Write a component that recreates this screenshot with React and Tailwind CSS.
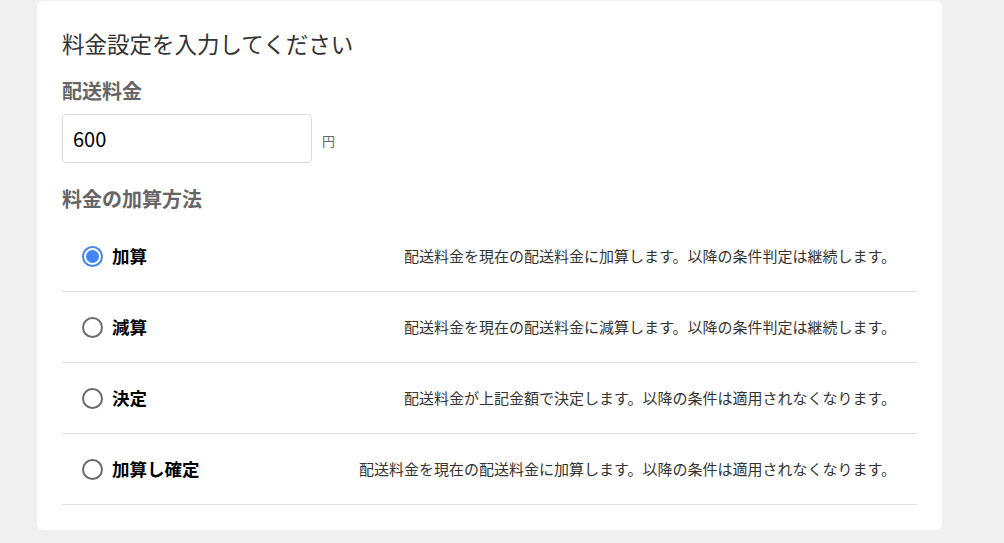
const options = [
  { label: "加算", desc: "配送料金を現在の配送料金に加算します。以降の条件判定は継続します。", checked: true },
  { label: "減算", desc: "配送料金を現在の配送料金に減算します。以降の条件判定は継続します。" },
  { label: "決定", desc: "配送料金が上記金額で決定します。以降の条件は適用されなくなります。" },
  { label: "加算し確定", desc: "配送料金を現在の配送料金に加算します。以降の条件は適用されなくなります。" },
];

const Radio = ({ checked }) =>
  checked ? (
    <span className="w-[21px] h-[21px] rounded-full border-2 border-[#4285f4] flex items-center justify-center shrink-0">
      <span className="w-[13px] h-[13px] rounded-full bg-[#4285f4]" />
    </span>
  ) : (
    <span className="w-[21px] h-[21px] rounded-full border-2 border-[#6b6b6b] shrink-0" />
  );

export default function App() {
  return (
    <div
      className="min-h-screen bg-[#f0f0f0] pt-px pl-[37px]"
      style={{ fontFamily: '"Noto Sans CJK JP", "Noto Sans", sans-serif' }}
    >
      <div className="w-[905px] bg-white rounded-md px-[25px] pt-[26px] pb-[25px]">
        <h1 className="text-[22.5px] leading-[32px] text-[#333]">料金設定を入力してください</h1>

        {/* Shipping fee */}
        <div className="mt-[18px] text-[20px] leading-[28px] font-bold text-[#666]">配送料金</div>
        <div className="mt-[9px] flex items-center">
          <input
            type="text"
            defaultValue="600"
            className="w-[250px] h-[49px] rounded border border-[#dcdcdc] px-[10px] text-[20px] text-black outline-none"
          />
          <span className="ml-[10px] text-[13px] text-[#666] pt-1">円</span>
        </div>

        {/* Calculation method */}
        <div className="mt-[22px] text-[20px] leading-[28px] font-bold text-[#666]">料金の加算方法</div>
        <div className="mt-2">
          {options.map((o) => (
            <label
              key={o.label}
              className="h-[71px] flex items-center border-b border-[#e0e0e0] pl-5 pr-[21px] cursor-pointer"
            >
              <Radio checked={o.checked} />
              <span className="ml-[9px] text-[17.5px] font-bold text-black">{o.label}</span>
              <span className="ml-auto text-[15px] text-[#333]">{o.desc}</span>
            </label>
          ))}
        </div>
      </div>
    </div>
  );
}
